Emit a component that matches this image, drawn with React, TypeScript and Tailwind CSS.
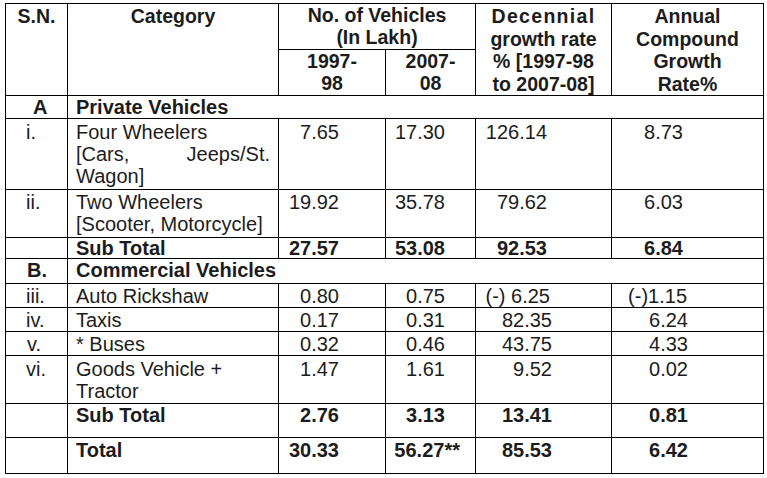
import React from "react";

const C = ({ className = "", children }: { className?: string; children?: React.ReactNode }) => (
  <div className={"bg-white " + className}>{children}</div>
);

const App = () => {
  return (
    <div className="min-h-screen bg-white pt-[3px] pl-[5px] font-['Liberation_Sans',Arial,sans-serif] text-[20px] text-[#1c1c1c]">
      <div className="grid w-fit grid-cols-[61px_210px_106px_89px_135px_151px] grid-rows-[45px_45px_22px_70px_47px_20px_24px_23px_23px_23px_47px_33px_35px] gap-px border border-black bg-black">
        {/* header */}
        <C className="row-span-2 pt-[1px] text-center text-[19.5px] font-bold leading-[22.5px]">S.N.</C>
        <C className="row-span-2 pt-[1px] text-center text-[19.5px] font-bold leading-[22.5px]">Category</C>
        <C className="col-span-2 text-center text-[19.5px] font-bold leading-[22px]">
          No. of Vehicles
          <br />
          (In Lakh)
        </C>
        <C className="row-span-2 pt-[1px] text-center text-[19.5px] font-bold leading-[22.5px]">
          <span className="tracking-[1.3px]">Decennial</span>
          <br />
          growth rate
          <br />% [1997-98
          <br />
          to 2007-08]
        </C>
        <C className="row-span-2 pt-[1px] text-center text-[19.5px] font-bold leading-[22.5px]">
          Annual
          <br />
          Compound
          <br />
          Growth
          <br />
          Rate%
        </C>
        <C className="text-center text-[19.5px] font-bold leading-[22px]">
          1997-
          <br />
          98
        </C>
        <C className="text-center text-[19.5px] font-bold leading-[22px]">
          2007-
          <br />
          08
        </C>

        {/* A */}
        <C className="pl-[27px] font-bold leading-[22px]">A</C>
        <C className="col-span-5 pl-[8px] font-bold leading-[22px]">Private Vehicles</C>

        {/* i */}
        <C className="pl-[20px] pt-[2px] leading-[22px]">i.</C>
        <C className="px-[8px] pt-[2px] leading-[22px]">
          Four Wheelers
          <span className="block text-justify">[Cars, Jeeps/St. Wagon]</span>
        </C>
        <C className="pr-[46px] pt-[2px] text-right leading-[22px]">7.65</C>
        <C className="pr-[30px] pt-[2px] text-right leading-[22px]">17.30</C>
        <C className="pr-[64px] pt-[2px] text-right leading-[22px]">126.14</C>
        <C className="pr-[80px] pt-[2px] text-right leading-[22px]">8.73</C>

        {/* ii */}
        <C className="pl-[20px] pt-[1px] leading-[22px]">ii.</C>
        <C className="px-[8px] pt-[1px] leading-[22px]">
          Two Wheelers
          <br />
          [Scooter, Motorcycle]
        </C>
        <C className="pr-[46px] pt-[1px] text-right leading-[22px]">19.92</C>
        <C className="pr-[30px] pt-[1px] text-right leading-[22px]">35.78</C>
        <C className="pr-[64px] pt-[1px] text-right leading-[22px]">79.62</C>
        <C className="pr-[80px] pt-[1px] text-right leading-[22px]">6.03</C>

        {/* sub total A */}
        <C className="leading-[20px]"></C>
        <C className="pl-[8px] font-bold leading-[20px]">Sub Total</C>
        <C className="pr-[46px] text-right font-bold leading-[20px]">27.57</C>
        <C className="pr-[30px] text-right font-bold leading-[20px]">53.08</C>
        <C className="pr-[64px] text-right font-bold leading-[20px]">92.53</C>
        <C className="pr-[80px] text-right font-bold leading-[20px]">6.84</C>

        {/* B */}
        <C className="pl-[21px] font-bold leading-[22px]">B.</C>
        <C className="col-span-5 pl-[8px] font-bold leading-[22px]">Commercial Vehicles</C>

        {/* iii */}
        <C className="pl-[20px] pt-[1px] leading-[22px]">iii.</C>
        <C className="pl-[8px] pt-[1px] leading-[22px]">Auto Rickshaw</C>
        <C className="pr-[46px] pt-[1px] text-right leading-[22px]">0.80</C>
        <C className="pr-[30px] pt-[1px] text-right leading-[22px]">0.75</C>
        <C className="pr-[61px] pt-[1px] text-right leading-[22px]">(-) 6.25</C>
        <C className="pr-[76px] pt-[1px] text-right leading-[22px]">(-)1.15</C>

        {/* iv */}
        <C className="pl-[20px] pt-[1px] leading-[22px]">iv.</C>
        <C className="pl-[8px] pt-[1px] leading-[22px]">Taxis</C>
        <C className="pr-[46px] pt-[1px] text-right leading-[22px]">0.17</C>
        <C className="pr-[30px] pt-[1px] text-right leading-[22px]">0.31</C>
        <C className="pr-[59px] pt-[1px] text-right leading-[22px]">82.35</C>
        <C className="pr-[75px] pt-[1px] text-right leading-[22px]">6.24</C>

        {/* v */}
        <C className="pl-[21px] pt-[1px] leading-[22px]">v.</C>
        <C className="pl-[8px] pt-[1px] leading-[22px]">* Buses</C>
        <C className="pr-[46px] pt-[1px] text-right leading-[22px]">0.32</C>
        <C className="pr-[30px] pt-[1px] text-right leading-[22px]">0.46</C>
        <C className="pr-[59px] pt-[1px] text-right leading-[22px]">43.75</C>
        <C className="pr-[75px] pt-[1px] text-right leading-[22px]">4.33</C>

        {/* vi */}
        <C className="pl-[20px] pt-[2px] leading-[22px]">vi.</C>
        <C className="pl-[8px] pt-[2px] leading-[22px]">
          Goods Vehicle +
          <br />
          Tractor
        </C>
        <C className="pr-[46px] pt-[2px] text-right leading-[22px]">1.47</C>
        <C className="pr-[30px] pt-[2px] text-right leading-[22px]">1.61</C>
        <C className="pr-[59px] pt-[2px] text-right leading-[22px]">9.52</C>
        <C className="pr-[75px] pt-[2px] text-right leading-[22px]">0.02</C>

        {/* sub total B */}
        <C className="leading-[22px]"></C>
        <C className="pl-[8px] font-bold leading-[22px]">Sub Total</C>
        <C className="pr-[46px] text-right font-bold leading-[22px]">2.76</C>
        <C className="pr-[30px] text-right font-bold leading-[22px]">3.13</C>
        <C className="pr-[59px] text-right font-bold leading-[22px]">13.41</C>
        <C className="pr-[75px] text-right font-bold leading-[22px]">0.81</C>

        {/* total */}
        <C className="pt-[1px] leading-[22px]"></C>
        <C className="pl-[8px] pt-[1px] font-bold leading-[22px]">Total</C>
        <C className="pr-[46px] pt-[1px] text-right font-bold leading-[22px]">30.33</C>
        <C className="pr-[30px] pt-[1px] text-right font-bold leading-[22px]">
          56.27<span className="-mr-[15px]">**</span>
        </C>
        <C className="pr-[59px] pt-[1px] text-right font-bold leading-[22px]">85.53</C>
        <C className="pr-[75px] pt-[1px] text-right font-bold leading-[22px]">6.42</C>
      </div>
    </div>
  );
};

export default App;
